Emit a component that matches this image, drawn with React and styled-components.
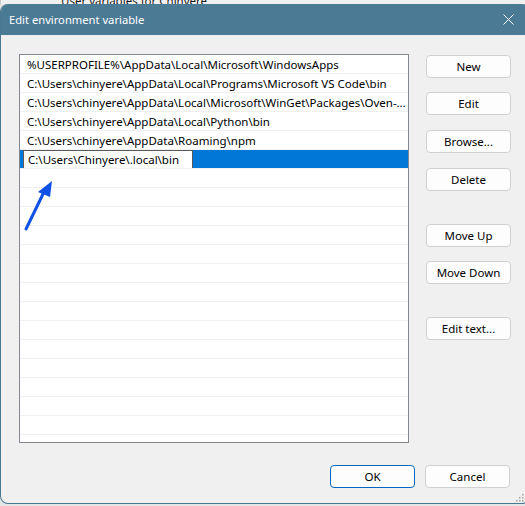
import React from "react";
import styled, { createGlobalStyle } from "styled-components";

const GlobalStyle = createGlobalStyle`
  html, body {
    margin: 0;
    padding: 0;
    background: #e6e6e6;
    overflow: hidden;
  }
  body {
    font-family: "Noto Sans", "Open Sans", sans-serif;
    font-size: 11.5px;
    color: #000;
  }
`;

const Screen = styled.div`
  width: 525px;
  height: 506px;
  display: flex;
  flex-direction: column;
  overflow: hidden;
`;

// sliver of the parent window peeking above the dialog
const ParentStrip = styled.div`
  height: 4px;
  flex: none;
  overflow: hidden;
  background: #f0f0f0;
  display: flex;
  align-items: flex-end;
  padding-left: 38px;
  border-left: 1px solid #c8c8c8;
`;

const ParentLabel = styled.div`
  margin-left: 22px;
  margin-bottom: -4px;
  line-height: 14px;
  text-decoration: underline;
  color: #1a1a1a;
  white-space: nowrap;
`;

const Dialog = styled.div`
  position: relative;
  width: 528px;
  height: 499px;
  flex: none;
  display: flex;
  flex-direction: column;
  background: #f0f0f0;
  border: 1px solid #4a7893;
  border-top: none;
  border-radius: 8px;
  overflow: hidden;
`;

const TitleBar = styled.div`
  height: 31px;
  flex: none;
  background: #4b7a95;
  color: #fff;
  display: flex;
  align-items: center;
  justify-content: space-between;
  padding: 0 15px 0 8px;
  font-size: 11.2px;
`;

const CloseIcon = styled.svg`
  width: 11px;
  height: 11px;
`;

const Body = styled.div`
  flex: 1;
  display: flex;
  flex-direction: column;
  padding: 19px 0 15px 18px;
`;

const Main = styled.div`
  display: flex;
  gap: 17px;
`;

const ListBox = styled.div`
  position: relative;
  width: 388px;
  height: 387px;
  background: #fff;
  border: 1px solid #828790;
  overflow: hidden;
`;

const Row = styled.div`
  height: 18px;
  border-bottom: 1px solid #f0f0f0;
  display: flex;
  align-items: center;
  padding-left: ${p => (p.$selected ? "3px" : "7px")};
  padding-right: 2px;
  background: ${p => (p.$selected ? "#0078d7" : "#fff")};
  white-space: nowrap;
  overflow: hidden;
`;

const RowText = styled.span`
  overflow: hidden;
  text-overflow: ellipsis;
  white-space: nowrap;
`;

const EditField = styled.div`
  box-sizing: border-box;
  width: 170px;
  height: 19px;
  margin-top: 1px;
  background: #fff;
  border: 1px solid #5a5a5a;
  display: flex;
  align-items: center;
  padding-left: 4px;
  flex: none;
`;

const Arrow = styled.svg`
  position: absolute;
  left: 0;
  top: 0;
  pointer-events: none;
`;

const Side = styled.div`
  display: flex;
  flex-direction: column;
  padding-top: 1px;
`;

const Button = styled.button`
  width: 85px;
  height: 23px;
  margin-top: ${p => p.$gap || 0}px;
  padding: 0;
  box-sizing: border-box;
  font-family: inherit;
  font-size: 11.5px;
  color: #000;
  background: #fdfdfd;
  border: 1px solid ${p => (p.$primary ? "#0067c0" : "#d0d0d0")};
  border-radius: 4px;
`;

const Footer = styled.div`
  margin-top: auto;
  display: flex;
  justify-content: flex-end;
  gap: 10px;
  padding-right: 19px;
`;

const Grip = styled.svg`
  position: absolute;
  right: 5px;
  bottom: 1px;
`;

const paths = [
  "%USERPROFILE%\\AppData\\Local\\Microsoft\\WindowsApps",
  "C:\\Users\\chinyere\\AppData\\Local\\Programs\\Microsoft VS Code\\bin",
  "C:\\Users\\chinyere\\AppData\\Local\\Microsoft\\WinGet\\Packages\\Oven-sh.Bun_Microsoft.Winget.Source_8wekyb3d8bbwe\\bun-windows-x64",
  "C:\\Users\\chinyere\\AppData\\Local\\Python\\bin",
  "C:\\Users\\chinyere\\AppData\\Roaming\\npm",
];

const sideButtons = [
  { label: "New", gap: 0 },
  { label: "Edit", gap: 14 },
  { label: "Browse...", gap: 15 },
  { label: "Delete", gap: 15 },
  { label: "Move Up", gap: 33 },
  { label: "Move Down", gap: 14 },
  { label: "Edit text...", gap: 33 },
];

export default function App() {
  const blanks = Array.from({ length: 15 });
  return (
    <>
      <GlobalStyle />
      <Screen>
        <ParentStrip>
          <ParentLabel>User variables for Chinyere</ParentLabel>
        </ParentStrip>
        <Dialog>
          <TitleBar>
            <span>Edit environment variable</span>
            <CloseIcon viewBox="0 0 11 11">
              <path d="M0.5 0.5 L10.5 10.5 M10.5 0.5 L0.5 10.5" stroke="#fff" strokeWidth="1" fill="none" />
            </CloseIcon>
          </TitleBar>
          <Body>
            <Main>
              <ListBox>
                {paths.map(p => (
                  <Row key={p}>
                    <RowText>{p}</RowText>
                  </Row>
                ))}
                <Row $selected>
                  <EditField>C:\Users\Chinyere\.local\bin</EditField>
                </Row>
                {blanks.map((_, i) => (
                  <Row key={i} />
                ))}
                <Arrow width="80" height="240" viewBox="0 0 80 240">
                  <line x1="6" y1="174" x2="24" y2="137" stroke="#1152e6" strokeWidth="3" strokeLinecap="round" />
                  <polygon points="32,126 18,137 30,142" fill="#1152e6" />
                </Arrow>
              </ListBox>
              <Side>
                {sideButtons.map(b => (
                  <Button key={b.label} $gap={b.gap}>{b.label}</Button>
                ))}
              </Side>
            </Main>
            <Footer>
              <Button $primary>OK</Button>
              <Button>Cancel</Button>
            </Footer>
          </Body>
          <Grip width="8" height="8" viewBox="0 0 8 8">
            <rect x="6" y="0" width="1.5" height="1.5" fill="#a0a0a0" />
            <rect x="3" y="3" width="1.5" height="1.5" fill="#a0a0a0" />
            <rect x="6" y="3" width="1.5" height="1.5" fill="#a0a0a0" />
            <rect x="0" y="6" width="1.5" height="1.5" fill="#a0a0a0" />
            <rect x="3" y="6" width="1.5" height="1.5" fill="#a0a0a0" />
            <rect x="6" y="6" width="1.5" height="1.5" fill="#a0a0a0" />
          </Grip>
        </Dialog>
      </Screen>
    </>
  );
}
